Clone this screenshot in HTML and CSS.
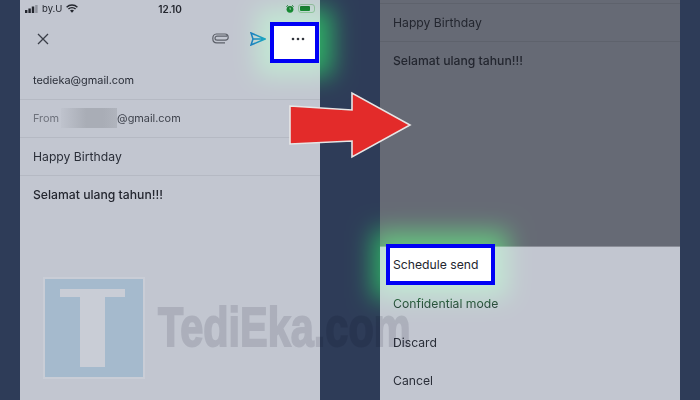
FILE: index.html
```html
<!DOCTYPE html>
<html lang="en">
<head>
<meta charset="UTF-8" />
<title>Schedule send</title>
<link rel="stylesheet" href="styles.css">
</head>
<body>
  <div class="stage">
    <div class="phone">
      <div class="status">
        <div class="status-left">
          <svg class="signal" width="13" height="8" viewBox="0 0 13 8"><rect x="0" y="5" width="2.4" height="3" fill="#23262e"/><rect x="3.4" y="3.5" width="2.4" height="4.5" fill="#23262e"/><rect x="6.8" y="1.5" width="2.4" height="6.5" fill="#23262e"/><rect x="10.2" y="0" width="2.4" height="8" fill="#8f939d"/></svg>
          <span>by.U</span>
          <svg class="wifi" width="12" height="9" viewBox="0 0 12 9"><path d="M0.6 3.2C3.6 0.4 8.4 0.4 11.4 3.2M2.4 5C4.4 3.2 7.6 3.2 9.6 5" fill="none" stroke="#23262e" stroke-width="1.5"/><path d="M4 6.4C5.2 5.4 6.8 5.4 8 6.4L6 8.8Z" fill="#23262e"/></svg>
        </div>
        <div class="clock">12.10</div>
        <div class="status-right">
          <svg width="8" height="8" viewBox="0 0 8 8"><circle cx="4" cy="4.3" r="3.4" fill="#17502a"/><path d="M0.4 1.6L1.8 0.3M7.6 1.6L6.2 0.3" stroke="#17502a" stroke-width="1"/><path d="M4 2.4V4.4L5 3.6" stroke="#b9d4c0" stroke-width="0.7" fill="none"/></svg>
          <div class="battery"><div class="battery-fill"></div></div>
        </div>
      </div>
      <div class="toolbar">
        <svg class="close" width="12" height="12" viewBox="0 0 12 12"><path d="M1 1L11 11M11 1L1 11" stroke="#3a3e48" stroke-width="1.3" fill="none"/></svg>
        <div class="toolbar-actions">
          <svg width="17" height="11" viewBox="0 0 17 11"><path d="M15 3.2H5.2C3.6 3.2 3 4.2 3 5.2C3 6.4 3.8 7.1 5.2 7.1H13.4C15.4 7.1 16.2 6 16.2 4.6C16.2 2.4 14.8 1 13 1H4.4C2 1 0.8 3 0.8 5.4C0.8 8 2.4 9.8 4.8 9.8H13" fill="none" stroke="#5c6069" stroke-width="1.2"/></svg>
          <svg class="send" width="16" height="14" viewBox="0 0 16 14"><path d="M1 1L15 7L1 13L3 7ZM3 7H15" fill="none" stroke="#1a62bc" stroke-width="1.5" stroke-linejoin="miter"/></svg>
        </div>
      </div>
      <div class="row row-small">tedieka@gmail.com</div>
      <div class="row row-small"><span class="muted">From</span><span class="blurred"></span><span class="muted-dark">@gmail.com</span></div>
      <div class="row">Happy Birthday</div>
      <div class="message">Selamat ulang tahun!!!</div>
    </div>

    <div class="phone phone-dim">
      <div class="row row-cut"></div>
      <div class="row">Happy Birthday</div>
      <div class="message">Selamat ulang tahun!!!</div>
      <div class="sheet">
        <div class="sheet-item"></div>
        <div class="sheet-item">Confidential mode</div>
        <div class="sheet-item">Discard</div>
        <div class="sheet-item">Cancel</div>
      </div>
    </div>
  </div>

  <!-- watermark -->
  <div class="wm-logo"><div class="wm-bar"></div><div class="wm-stem"></div></div>
  <div class="wm-text">TediEka.com</div>

  <!-- highlights -->
  <div class="glow glow-more"></div>
  <div class="glow glow-schedule"></div>
  <div class="mark mark-more">
    <svg width="14" height="4" viewBox="0 0 14 4"><circle cx="2" cy="2" r="1.3" fill="#33363e"/><circle cx="7" cy="2" r="1.3" fill="#33363e"/><circle cx="12" cy="2" r="1.3" fill="#33363e"/></svg>
  </div>
  <div class="mark mark-schedule">Schedule send</div>

  <svg class="arrow" width="124" height="68" viewBox="0 0 124 68"><polygon points="1,15 63,19 63,2 121,34 63,66 63,50 1,53" fill="#e32b2a" stroke="#e6e6e6" stroke-width="1.6"/></svg>
</body>
</html>
```

FILE: styles.css
```css
body, html {
  margin: 0;
  padding: 0;
  height: 100%;
  overflow: hidden;
  background: #2e3c58;
  font-family: Inter, "Liberation Sans", sans-serif;
}
.stage {
  display: flex;
  gap: 60px;
  padding: 0 20px;
  height: 400px;
}
.phone {
  width: 300px;
  height: 400px;
  background: #c2c6d0;
  color: #2a2e38;
  display: flex;
  flex-direction: column;
  font-size: 12.2px;
}
.phone-dim {
  background: #666a75;
  color: #23262f;
}
.status {
  height: 17px;
  padding: 0 5px;
  display: flex;
  align-items: center;
  justify-content: space-between;
  font-size: 9.5px;
  color: #23262e;
}
.status-left {
  display: flex;
  align-items: center;
  gap: 4px;
  width: 100px;
}
.clock {
  font-weight: 600;
  font-size: 10px;
}
.status-right {
  display: flex;
  align-items: center;
  justify-content: flex-end;
  gap: 4px;
  width: 100px;
}
.battery {
  width: 17px;
  height: 9px;
  box-sizing: border-box;
  border: 1px solid #8fa898;
  border-radius: 3px;
  padding: 1px;
}
.battery-fill {
  width: 10px;
  height: 5px;
  background: #17502a;
  border-radius: 1px;
}
.toolbar {
  height: 45px;
  box-sizing: border-box;
  padding: 0 54px 2px 17px;
  display: flex;
  align-items: center;
  justify-content: space-between;
}
.toolbar-actions {
  display: flex;
  align-items: center;
  gap: 21px;
}
.row {
  height: 38px;
  box-sizing: border-box;
  padding: 0 13px;
  display: flex;
  align-items: center;
  border-bottom: 1px solid #b5b9c3;
  flex-shrink: 0;
}
.row-small {
  font-size: 10.9px;
  padding-bottom: 1px;
}
.phone-dim .row {
  border-bottom-color: #5e626c;
}
.phone-dim .row-cut {
  height: 4px;
}
.muted {
  color: #6e727c;
}
.muted-dark {
  color: #3e424c;
}
.blurred {
  width: 56px;
  height: 20px;
  margin-left: 2px;
  background: linear-gradient(90deg, #bfc3cd, #a9adb6 45%, #a9adb6 75%, #b0b4bd);
}
.message {
  padding: 11px 13px;
  font-weight: 500;
  color: #23262f;
}
.sheet {
  margin-top: auto;
  height: 154px;
  background: #c2c6d0;
  color: #2a2e38;
  border-top: 1px solid #8b8e98;
  box-sizing: border-box;
}
.sheet-item {
  height: 38.3px;
  padding: 0 13px 1px;
  box-sizing: border-box;
  display: flex;
  align-items: center;
}

/* watermark */
.wm-logo {
  position: absolute;
  left: 43px;
  top: 277px;
  width: 98px;
  height: 98px;
  background: #a5bacd;
  border: 2px solid #c9cdd6;
}
.wm-bar {
  position: absolute;
  left: 15px;
  top: 10px;
  width: 65px;
  height: 8px;
  background: #c9cdd6;
}
.wm-stem {
  position: absolute;
  left: 35px;
  top: 18px;
  width: 25px;
  height: 70px;
  background: #c9cdd6;
}
.wm-text {
  position: absolute;
  left: 158px;
  top: 295px;
  font-family: "Liberation Sans", sans-serif;
  font-weight: bold;
  font-size: 56px;
  line-height: 64px;
  color: #00001a;
  -webkit-text-stroke: 2px #00001a;
  opacity: 0.11;
  transform: scaleX(0.74);
  transform-origin: left center;
  white-space: nowrap;
}

/* highlights */
.glow {
  position: absolute;
  mix-blend-mode: screen;
  background: rgb(0, 150, 20);
  box-shadow: 0 0 24px 13px rgb(0, 150, 20);
}
.glow-more {
  left: 270px;
  top: 22px;
  width: 49px;
  height: 41px;
}
.glow-schedule {
  left: 386px;
  top: 244px;
  width: 109px;
  height: 41px;
}
.mark {
  position: absolute;
  box-sizing: border-box;
  background: #fff;
  border: 4px solid #0000f5;
  display: flex;
  align-items: center;
}
.mark-more {
  left: 270px;
  top: 22px;
  width: 49px;
  height: 41px;
  padding: 0 0 8px 17px;
}
.mark-schedule {
  left: 386px;
  top: 244px;
  width: 109px;
  height: 41px;
  padding-left: 3px;
  font-size: 12.2px;
  color: #23262f;
  white-space: nowrap;
}
.arrow {
  position: absolute;
  left: 289px;
  top: 91px;
}
```
